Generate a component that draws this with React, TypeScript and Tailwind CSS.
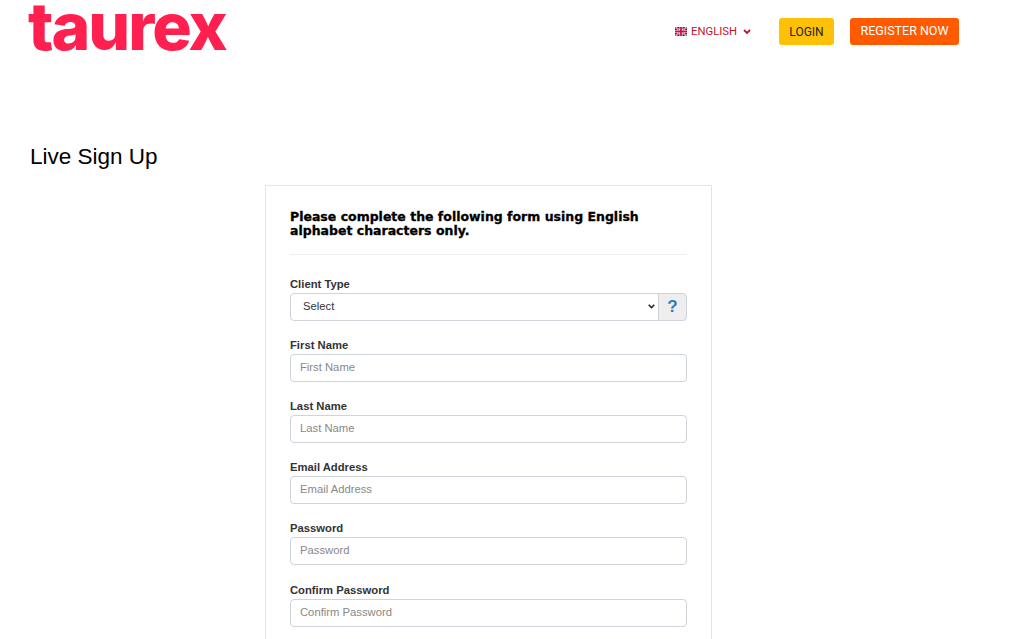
const fields = [
  { label: "First Name", type: "text" },
  { label: "Last Name", type: "text" },
  { label: "Email Address", type: "email" },
  { label: "Password", type: "password" },
  { label: "Confirm Password", type: "password" },
]

function UkFlag() {
  return (
    <svg className="w-[12px] h-[9px] mb-[1px]" viewBox="0 0 60 45">
      <rect width="60" height="45" fill="#23237f" />
      <path d="M0 0L60 45M60 0L0 45" stroke="#fff" strokeWidth="9" />
      <path d="M0 0L60 45M60 0L0 45" stroke="#d0103a" strokeWidth="4" />
      <path d="M30 0V45M0 22.5H60" stroke="#fff" strokeWidth="15" />
      <path d="M30 0V45M0 22.5H60" stroke="#d0103a" strokeWidth="9" />
    </svg>
  )
}

export default function App() {
  return (
    <div className="h-screen overflow-hidden bg-white font-['Liberation_Sans',Arial,sans-serif] text-[#333333]">
      <header className="flex items-start justify-between h-[143px] pl-[28px] pr-[65px]">
        <div className="font-['Inter',sans-serif] font-extrabold text-[#ff2050] text-[66px] leading-[52px] tracking-[-2px]">
          taurex
        </div>
        <nav className="flex items-center mt-[18px] font-['Roboto',sans-serif] text-[12px]">
          <button className="flex items-center text-[#c8102e]">
            <UkFlag />
            <span className="ml-[4px] mt-[1px] text-[11.25px]">ENGLISH</span>
            <svg className="w-[8px] h-[6px] ml-[6px]" viewBox="0 0 8 6" fill="none" stroke="#c8102e" strokeWidth="1.8">
              <path d="M1 1l3 3 3-3" />
            </svg>
          </button>
          <a className="flex items-center justify-center ml-[28px] w-[55px] h-[27px] rounded-[3px] bg-[#ffc107] text-[#212529]">LOGIN</a>
          <a className="flex items-center justify-center ml-[16px] w-[109px] h-[27px] rounded-[3px] bg-[#ff5a00] text-white text-[12.5px]">REGISTER NOW</a>
        </nav>
      </header>

      <h1 className="pl-[30px] text-[22.5px] leading-[28px] text-black">Live Sign Up</h1>

      <div className="flex mt-[14px] pl-[265px]">
        <form className="w-[447px] px-[24px] pt-[24px] pb-[24px] border border-[#e5e5e5] border-b-0">
          <h2 className="font-['DejaVu_Sans',sans-serif] font-bold text-[12.5px] leading-[14px] text-black [-webkit-text-stroke:0.3px_black]">
            Please complete the following form using English alphabet characters only.
          </h2>
          <hr className="mt-[16px] mb-[22px] border-[#eeeeee]" />

          <label className="block text-[11.25px] font-bold leading-[14px] mb-[2px]">Client Type</label>
          <div className="flex h-[28px]">
            <div className="relative flex-1 min-w-0">
              <select className="appearance-none block w-full h-full pl-[12px] pr-[20px] pb-[1px] text-[11.25px] text-[#333333] bg-white border border-[#ced4da] rounded-l-[4px] outline-none">
                <option>Select</option>
              </select>
              <svg className="absolute right-[4px] top-[11px] w-[7px] h-[5px]" viewBox="0 0 7 5" fill="none" stroke="#222222" strokeWidth="1.5">
                <path d="M0.7 0.8l2.8 2.8 2.8-2.8" />
              </svg>
            </div>
            <span className="flex items-center justify-center w-[29px] -ml-px bg-[#eeeeee] border border-[#ced4da] rounded-r-[4px] text-[#337ab7] font-bold text-[17px]">?</span>
          </div>

          {fields.map((field) => (
            <div key={field.label} className="mt-[17px] last:mt-[18px]">
              <label className="block text-[11.25px] font-bold leading-[14px] mb-[2px]">{field.label}</label>
              <input
                type={field.type}
                placeholder={field.label}
                className="block w-full h-[28px] pl-[9px] pr-[10px] pb-[2px] text-[11.25px] bg-white border border-[#ced4da] rounded-[4px] outline-none placeholder:text-[#888888]"
              />
            </div>
          ))}
        </form>
      </div>
    </div>
  )
}
